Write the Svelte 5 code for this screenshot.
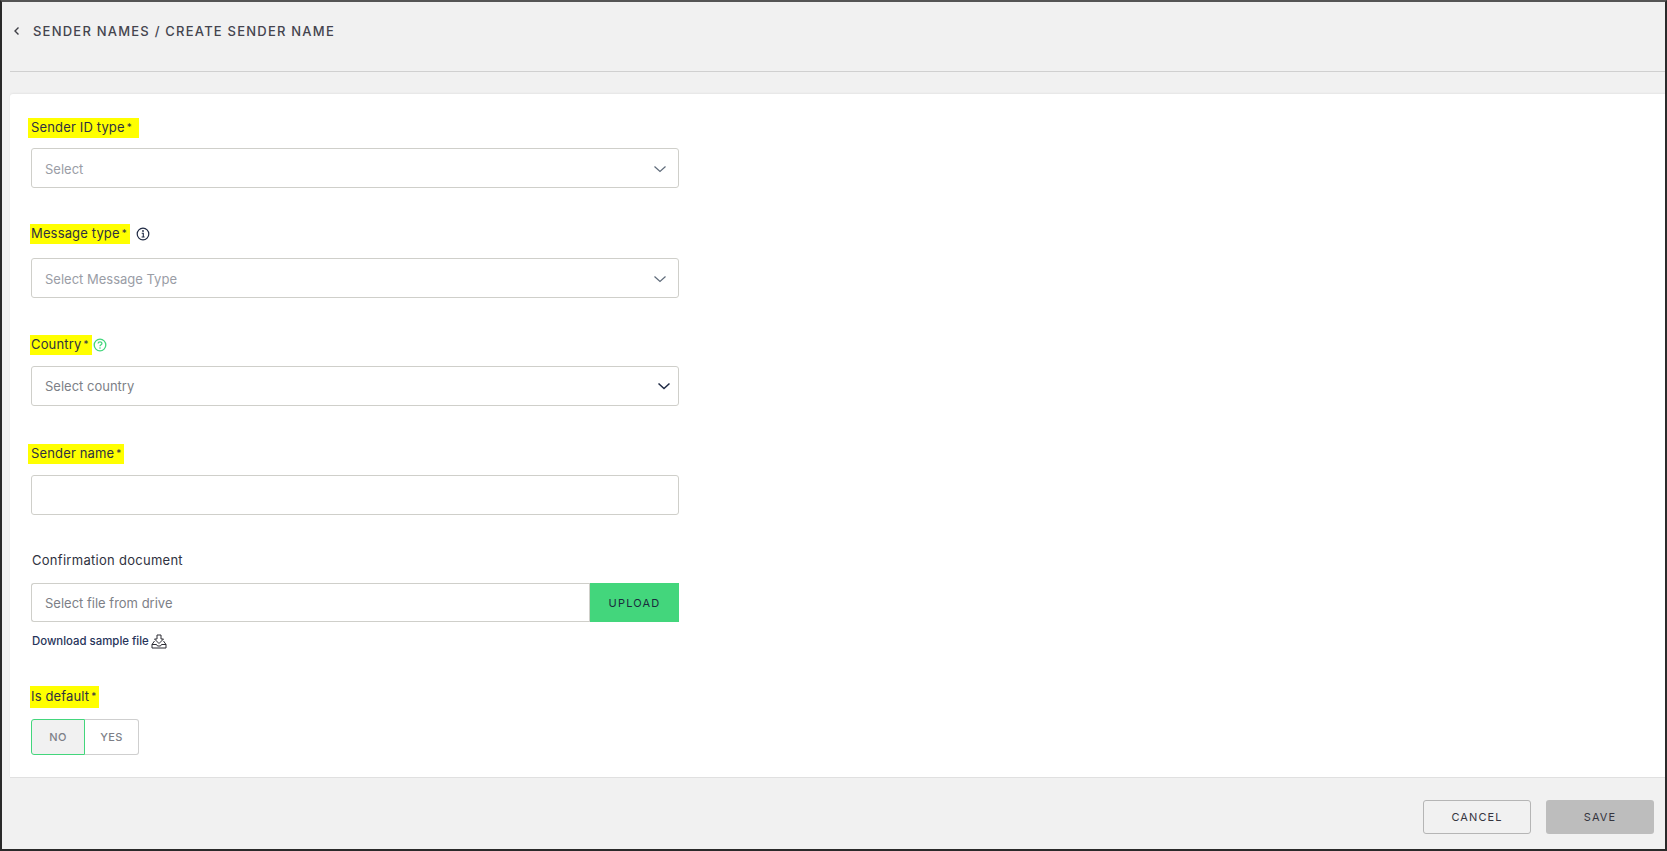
<script>
  let isDefault = $state(false);
</script>

<div class="page">
  <header class="top">
    <div class="crumbs">
      <svg class="back" width="8" height="10" viewBox="0 0 8 10"><path d="M5.500 1.500 2 5l3.500 3.500" fill="none" stroke="#3f3f46" stroke-width="1.400" /></svg>
      <span>SENDER NAMES / CREATE SENDER NAME</span>
    </div>
  </header>

  <main class="card">
    <section class="field f1">
      <div class="label"><span class="mark">Sender ID type<i>*</i></span></div>
      <div class="box">
        <span class="ph">Select</span>
        <svg class="chev" width="14" height="8" viewBox="0 0 14 8"><path d="M1.500 1.500 7 6.500l5.500-5" fill="none" stroke="#5f6b7a" stroke-width="1.200" /></svg>
      </div>
    </section>

    <section class="field f2">
      <div class="label">
        <span class="mark">Message type<i>*</i></span>
        <svg class="info" width="14" height="14" viewBox="0 0 14 14">
          <circle cx="7" cy="7" r="5.800" fill="none" stroke="#1f2a44" stroke-width="1.200" />
          <path d="M5.700 6.200H7.300V10M5.600 10H8.600" fill="none" stroke="#1f2a44" stroke-width="1.100" />
          <circle cx="7" cy="4" r="0.900" fill="#1f2a44" />
        </svg>
      </div>
      <div class="box">
        <span class="ph">Select Message Type</span>
        <svg class="chev" width="14" height="8" viewBox="0 0 14 8"><path d="M1.500 1.500 7 6.500l5.500-5" fill="none" stroke="#5f6b7a" stroke-width="1.200" /></svg>
      </div>
    </section>

    <section class="field f3">
      <div class="label">
        <span class="mark">Country<i>*</i></span>
        <svg class="help" width="14" height="14" viewBox="0 0 14 14">
          <circle cx="7" cy="7" r="5.800" fill="none" stroke="#43d67c" stroke-width="1.300" />
          <path d="M5.100 5.500C5.200 3.300 8.900 3.300 8.900 5.400 8.900 6.800 7 6.800 7 8.300" fill="none" stroke="#43d67c" stroke-width="1.300" />
          <circle cx="7" cy="10" r="0.800" fill="#43d67c" />
        </svg>
      </div>
      <div class="box">
        <span class="ph dark">Select country</span>
        <svg class="chev strong" width="14" height="8" viewBox="0 0 14 8"><path d="M1.500 1.500 7 6.500l5.500-5" fill="none" stroke="#1f2a44" stroke-width="1.500" /></svg>
      </div>
    </section>

    <section class="field f4">
      <div class="label"><span class="mark">Sender name<i>*</i></span></div>
      <div class="box"></div>
    </section>

    <section class="field f5">
      <div class="label"><span class="plain">Confirmation document</span></div>
      <div class="upload">
        <div class="box file"><span class="ph dark">Select file from drive</span></div>
        <button type="button" class="upload-btn">UPLOAD</button>
      </div>
      <div class="sample">
        <span>Download sample file</span>
        <svg width="16" height="15" viewBox="0 0 16 15">
          <path d="M6 1H10V5H12.500L8 9.500 3.500 5H6Z" fill="none" stroke="#2b2b33" stroke-width="1" />
          <path d="M3.500 7 1 10.500V14H15V10.500L12.500 7M1 10.500H5.500L6.500 12H9.500L10.500 10.500H15" fill="none" stroke="#2b2b33" stroke-width="1" />
        </svg>
      </div>
    </section>

    <section class="field f6">
      <div class="label"><span class="mark tall">Is default<i>*</i></span></div>
      <div class="toggle">
        <button type="button" class="opt" class:on={!isDefault} onclick={() => (isDefault = false)}>NO</button>
        <button type="button" class="opt" class:on={isDefault} onclick={() => (isDefault = true)}>YES</button>
      </div>
    </section>
  </main>

  <footer class="bottom">
    <button type="button" class="btn cancel">CANCEL</button>
    <button type="button" class="btn save">SAVE</button>
  </footer>
</div>

<style>
  :global(body) {
    background: #f1f1f1;
  }

  .page {
    box-sizing: border-box;
    height: 851px;
    border: 2px solid #2a2a2a;
    border-top-color: #555;
    background: #f1f1f1;
    display: flex;
    flex-direction: column;
    font-family: Inter, "Open Sans", sans-serif;
    color: #2f3240;
    overflow: hidden;
  }

  .top {
    box-sizing: border-box;
    height: 70px;
    margin-left: 8px;
    border-bottom: 1px solid #d0d0d0;
    flex-shrink: 0;
  }

  .crumbs {
    display: flex;
    align-items: center;
    height: 58px;
    margin-left: -8px;
    padding-left: 11px;
    font-size: 13px;
    font-weight: 500;
    letter-spacing: 1.220px;
    color: #44444e;
  }

  .back {
    margin-right: 12px;
  }

  .card {
    flex: 1;
    margin: 22px 0 0 8px;
    padding: 24px 21px 0;
    background: #fff;
    border-radius: 3px 0 0 0;
    border-bottom: 1px solid #e0e0e0;
    box-shadow: 0 -1px 2px rgba(0, 0, 0, 0.05);
  }

  .field {
    width: 648px;
  }

  .label {
    display: flex;
    align-items: center;
    height: 20px;
    font-size: 13px;
    letter-spacing: 0.15px;
    color: #2f3240;
  }

  .mark {
    background: #ffff00;
    padding: 0 3px 0 1px;
    height: 20px;
    line-height: 18px;
    white-space: nowrap;
    margin-left: -1px;
  }

  .mark i {
    font-style: normal;
    font-size: 10px;
    margin-left: 2px;
    position: relative;
    top: -1px;
  }

  .mark.tall {
    height: 22px;
    line-height: 21px;
  }

  .plain {
    white-space: nowrap;
    margin-left: 1px;
    letter-spacing: 0.28px;
  }

  .f1 .mark {
    margin-left: -3px;
    padding: 0 7px 0 3px;
  }

  .f1 .label {
    margin-bottom: 10px;
  }

  .f1 .box,
  .f2 .box {
    padding-top: 1px;
  }

  .f2 {
    margin-top: 36px;
  }

  .f2 .label {
    margin-bottom: 14px;
  }

  .info {
    margin-left: 6px;
  }

  .f3 {
    margin-top: 37px;
  }

  .f3 .label {
    margin-bottom: 11px;
  }

  .help {
    margin-left: 1px;
  }

  .f4 {
    margin-top: 38px;
  }

  .f4 .mark {
    margin-left: -3px;
    padding-left: 3px;
  }

  .f4 .label {
    margin-bottom: 11px;
  }

  .f5 {
    margin-top: 35px;
  }

  .f5 .label {
    margin-bottom: 13px;
  }

  .f6 {
    margin-top: 36px;
  }

  .f6 .label {
    margin-bottom: 12px;
  }

  .box {
    box-sizing: border-box;
    height: 40px;
    border: 1px solid #cfcfca;
    border-radius: 3px;
    display: flex;
    align-items: center;
    justify-content: space-between;
    padding: 0 13px;
    background: #fff;
  }

  .ph {
    font-size: 13px;
    color: #9a9da6;
  }

  .ph.dark {
    color: #7d7f87;
  }

  .chev {
    margin-right: -2px;
  }

  .chev.strong {
    margin-right: -6px;
  }

  .upload {
    display: flex;
    height: 39px;
  }

  .box.file {
    flex: 1;
    height: 39px;
    border-right: 0;
    border-radius: 3px 0 0 3px;
  }

  .upload-btn {
    width: 90px;
    border: 0;
    border-left: 1px solid #cfcfca;
    background: #43d67c;
    color: #1a2b3c;
    font-family: inherit;
    font-size: 11px;
    font-weight: 400;
    letter-spacing: 1.200px;
    padding: 0;
  }

  .sample {
    display: flex;
    align-items: center;
    gap: 2px;
    height: 20px;
    margin: 9px 0 0 1px;
    font-size: 11.400px;
    font-weight: 500;
    color: #27345a;
  }

  .toggle {
    display: flex;
    width: 108px;
    height: 36px;
  }

  .opt {
    box-sizing: border-box;
    flex: 1;
    padding: 0;
    border: 1px solid #cfcfcf;
    background: #fff;
    color: #7d7f87;
    font-family: inherit;
    font-size: 11px;
    font-weight: 500;
    letter-spacing: 0.3px;
  }

  .opt:first-child {
    flex: 0 0 54px;
    border-radius: 3px 0 0 3px;
    border-right: 0;
  }

  .opt:last-child {
    border-radius: 0 3px 3px 0;
    border-left: 0;
  }

  .opt.on {
    background: #f1f1f1;
    border: 1px solid #43d67c;
  }

  .bottom {
    box-sizing: border-box;
    height: 71px;
    flex-shrink: 0;
    margin-left: 8px;
    display: flex;
    justify-content: flex-end;
    align-items: flex-start;
    gap: 15px;
    padding: 22px 11px 0 0;
  }

  .btn {
    box-sizing: border-box;
    height: 34px;
    width: 108px;
    border-radius: 3px;
    padding: 0;
    font-family: inherit;
    font-size: 11px;
    font-weight: 400;
    letter-spacing: 1.100px;
    color: #35353f;
  }

  .cancel {
    border: 1px solid #b5b5b5;
    background: #f1f1f1;
  }

  .save {
    border: 0;
    background: #bdbdbd;
  }
</style>
